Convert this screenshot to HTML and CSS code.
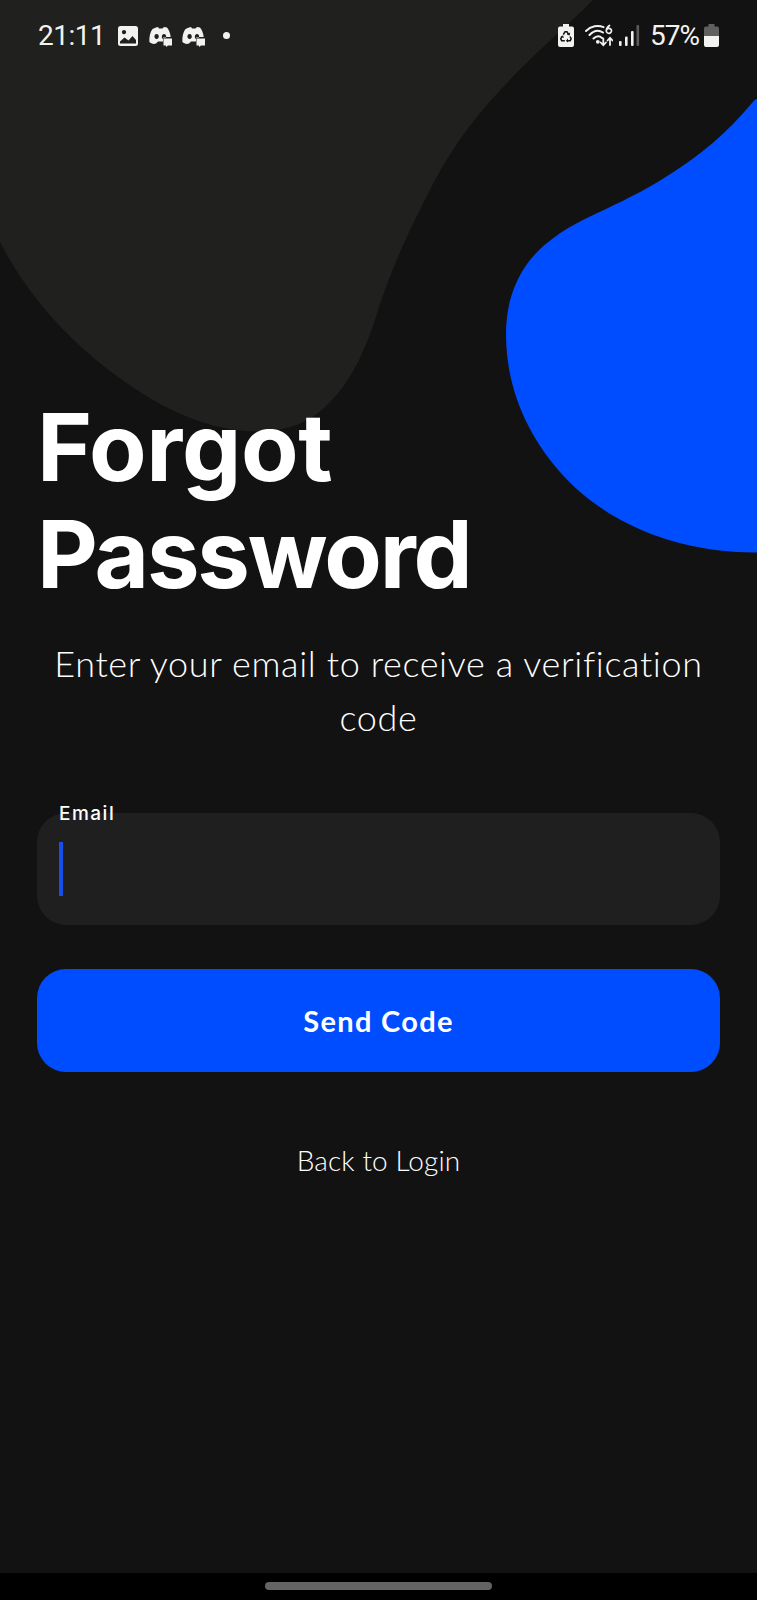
FILE: index.html
```
<!DOCTYPE html>
<html lang="en">
<head>
<meta charset="utf-8">
<title>Forgot Password</title>
<link rel="stylesheet" href="styles.css">
</head>
<body>
<div class="screen">
  <svg class="backdrop" viewBox="0 0 757 600" aria-hidden="true">
    <path fill="#20201e" d="M0 0H593C545 48 476 100 433 184C410 229 394 262 379 307C368 343 354 381 324 408C303 428 274 433 246 431C211 428 174 415 134 388C80 352 31 303 0 242Z"/>
    <path fill="#004dff" d="M757 99Q755 99 752 103C727 133 701 154 675 171C651 187 629 198 606 209C584 219 565 228 547 243C521 264 506 295 506 334C506 385 525 432 560 472C604 522 675 553 757 552.500Z"/>
  </svg>
  <header class="status">
    <span class="clock">21:11</span>
    <svg class="ic-image" width="20" height="20" viewBox="0 0 20 20"><path fill="#f2f2f0" fill-rule="evenodd" d="M2.500 0h15A2.500 2.500 0 0 1 20 2.500v15a2.500 2.500 0 0 1-2.500 2.500h-15A2.500 2.500 0 0 1 0 17.500v-15A2.500 2.500 0 0 1 2.500 0ZM2 17.500H18V14l-3.500-4-4 4.500-4-3-4.500 4ZM6 4a2.100 2.100 0 1 0 .01 0Z"/></svg>
    <svg class="ic-discord" width="24" height="20" viewBox="0 0 24 20"><path fill="#f2f2f0" fill-rule="evenodd" d="M7 .5 9 0l1 1.600h3.500L15 0l3 .5c2 2.500 3.300 5.500 3.700 9.500H14v4.500H9L7 16.500C4.500 17.500 2 16.500.4 15 0 10 1.200 5 3.500 2ZM7.600 7a2.200 2.500 0 1 0 .01 0ZM15 7c-2.500 0-2.800 4-1 5V10.500H17C17.500 8.500 16.500 7 15 7Z"/><path fill="#f2f2f0" d="M14.500 11.500H23v7h-4l-2 1.500v-1.500h-2.500Z"/></svg>
    <svg class="ic-discord" width="24" height="20" viewBox="0 0 24 20"><path fill="#f2f2f0" fill-rule="evenodd" d="M7 .5 9 0l1 1.600h3.500L15 0l3 .5c2 2.500 3.300 5.500 3.700 9.500H14v4.500H9L7 16.500C4.500 17.500 2 16.500.4 15 0 10 1.200 5 3.500 2ZM7.600 7a2.200 2.500 0 1 0 .01 0ZM15 7c-2.500 0-2.800 4-1 5V10.500H17C17.500 8.500 16.500 7 15 7Z"/><path fill="#f2f2f0" d="M14.500 11.500H23v7h-4l-2 1.500v-1.500h-2.500Z"/></svg>
    <span class="dot"></span>
    <span class="spacer"></span>
    <svg class="ic-saver" width="16" height="23" viewBox="0 0 16 23"><path fill="#f2f2f0" d="M5 0h6v2.500h3a2 2 0 0 1 2 2V21a2 2 0 0 1-2 2H2a2 2 0 0 1-2-2V4.500a2 2 0 0 1 2-2h3Z"/><path fill="none" stroke="#151515" stroke-width="1.500" d="M5.300 10.700 7 7.800h2l1.500 2.500M12 12.500l1.200 2.300-1 1.900H9.500M6.800 16.700H3.700l-1-1.900L4 12.500"/><path fill="#151515" d="m8.800 10.600 2.900.8.400-2.800ZM10 14.600v4l-2.200-1.900ZM2.500 12.300l2.800-.8.300 2.800Z"/></svg>
    <svg class="ic-wifi" width="28" height="24" viewBox="0 0 28 24"><g fill="none" stroke="#f2f2f0" stroke-width="2" stroke-linecap="round"><path d="M1 7C6 1.800 13 .8 18.500 3.200M4.500 11C9 6.300 14 6 18 8.500M8.500 14.500c3-2.800 6-2.800 8.500-.5"/><path stroke-width="1.800" d="M18.300 14.500V21m-2.600-2.500L18.300 21.200l2.600-2.700M25 21v-7m-2.500 2.500L25 13.800l2.500 2.700"/><path stroke-width="1.700" d="M24.500 1.500c-2 1.500-3.200 3.500-3.200 5.200a2.600 2.500 0 1 0 2.600-2.400c-1 0-1.700.4-2.200 1"/></g><circle cx="12.800" cy="17.800" r="1.900" fill="#f2f2f0"/></svg>
    <svg class="ic-signal" width="21" height="22" viewBox="0 0 21 22"><g fill="#f2f2f0"><rect x="0" y="16" width="2.600" height="5" rx="1"/><rect x="6" y="11.500" width="2.600" height="9.500" rx="1"/><rect x="12" y="6" width="2.600" height="15" rx="1"/><rect x="17.500" y="0" width="2.600" height="21" rx="1" fill="#5b5b5b"/></g></svg>
    <span class="percent">57%</span>
    <svg class="ic-battery" width="15" height="23" viewBox="0 0 15 23"><path fill="#606060" d="M4.500 0h6v2.500H13a2 2 0 0 1 2 2V12H0V4.500a2 2 0 0 1 2-2h2.500Z"/><path fill="#f2f2f0" d="M0 12h15v9a2 2 0 0 1-2 2H2a2 2 0 0 1-2-2Z"/></svg>
  </header>
  <main class="content">
    <h1 class="title"><span class="title-first">Forgot</span><span class="title-second">Password</span></h1>
    <p class="subtitle">Enter your email to receive a verification <span class="last">code</span></p>
    <div class="field">
      <label class="label">Email</label>
      <span class="caret"></span>
    </div>
    <button class="submit" type="button">Send Code</button>
    <a class="back">Back to Login</a>
  </main>
  <footer class="navbar"><span class="handle"></span></footer>
</div>
</body>
</html>
```
FILE: styles.css
```
* { box-sizing: border-box; }
body { margin: 0; background: #121212; }
.screen {
  position: relative;
  display: flex;
  flex-direction: column;
  width: 757px;
  height: 1600px;
  overflow: hidden;
  background: #121212;
  color: #fff;
  font-family: Lato, sans-serif;
}
.backdrop { position: absolute; top: 0; left: 0; width: 757px; height: 600px; }
.status {
  position: relative;
  display: flex;
  align-items: center;
  height: 71px;
  padding: 0 38px 0 38px;
  color: #f2f2f0;
  font: 400 28px/32px Roboto, sans-serif;
}
.status svg { flex: none; }
.clock { width: 79px; letter-spacing: -0.500px; }
.ic-image { margin-left: 1px; }
.ic-discord { margin: 3px -2px 0 11px; }
.dot { width: 7px; height: 7px; margin-left: 19px; border-radius: 50%; background: #f2f2f0; }
.spacer { flex: 1; }
.ic-wifi { margin: 1px 6px 0 11px; }
.ic-signal { margin-right: 10px; }
.percent { width: 54px; letter-spacing: -1px; white-space: nowrap; }
.content {
  position: relative;
  display: flex;
  flex: 1;
  flex-direction: column;
  padding: 323px 37px 0;
}
.title { display: flex; flex-direction: column; margin: 0; font: 700 94px/106.500px Inter, sans-serif; }
.title-first { letter-spacing: -0.400px; }
.title-second { letter-spacing: -2.200px; }
.subtitle {
  margin: 30px 0 0;
  color: #fff;
  font-size: 36px;
  line-height: 53.500px;
  font-weight: 300;
  letter-spacing: 0.620px;
  text-align: center;
}
.field { position: relative; height: 112px; margin-top: 69px; padding: 29px 22px; border-radius: 29px; background: #1f1f1f; }
.label { position: absolute; top: -11px; left: 22px; font: 500 19px/24px Inter, sans-serif; letter-spacing: 1.500px; }
.caret { display: block; width: 4px; height: 54px; background: #174fe8; }
.submit {
  height: 103px;
  margin-top: 44px;
  padding: 0;
  border: 0;
  border-radius: 29px;
  background: #004dff;
  color: #fff;
  font: 700 29px/34px Lato, sans-serif;
  letter-spacing: 1.300px;
}
.back { margin-top: 71px; font-size: 28px; line-height: 34px; font-weight: 300; letter-spacing: 0.100px; text-align: center; }
.navbar { position: relative; display: flex; justify-content: center; height: 27px; padding-top: 9px; background: #000; }
.handle { width: 227px; height: 8px; border-radius: 4px; background: #646464; }
```
